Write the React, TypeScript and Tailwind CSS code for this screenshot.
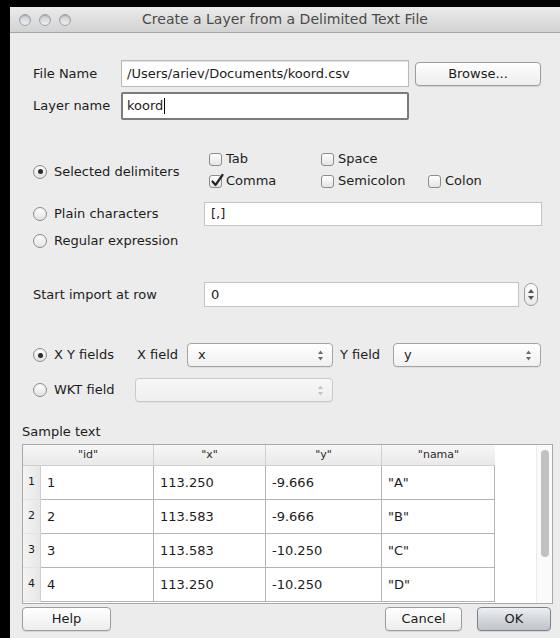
import React from "react";

function Radio({ checked }: { checked?: boolean }) {
  return (
    <span className="w-[14px] h-[14px] rounded-full border border-[#8c8c8c] bg-gradient-to-b from-white to-[#e2e2e2] flex items-center justify-center shrink-0 shadow-[inset_0_1px_1px_rgba(0,0,0,0.06)]">
      {checked && <span className="w-[5px] h-[5px] rounded-full bg-[#2b2b2b]" />}
    </span>
  );
}

function Check({ checked, label }: { checked?: boolean; label: string }) {
  return (
    <div className="flex items-center gap-[4px] h-[22px]">
      <span className="relative w-[13px] h-[13px] rounded-[3px] border border-[#8c8c8c] bg-gradient-to-b from-white to-[#e4e4e4] shrink-0">
        {checked && (
          <svg className="absolute left-[0px] top-[-3px]" width="15" height="15" viewBox="0 0 15 15">
            <path d="M2.5 8.5 L5.5 12 L12.5 2" fill="none" stroke="#262626" strokeWidth="2.2" strokeLinecap="round" strokeLinejoin="round" />
          </svg>
        )}
      </span>
      <span>{label}</span>
    </div>
  );
}

function Arrows({ faded }: { faded?: boolean }) {
  const c = faded ? "#c4c4c4" : "#6a6a6a";
  return (
    <svg width="7" height="11" viewBox="0 0 7 11">
      <path d="M3.5 0.5 L6 4 L1 4 Z" fill={c} />
      <path d="M3.5 10.5 L6 7 L1 7 Z" fill={c} />
    </svg>
  );
}

function Select({ value, width, disabled }: { value?: string; width: string; disabled?: boolean }) {
  return (
    <div
      className={`${width} h-[24px] rounded-[4px] border ${
        disabled ? "border-[#c9c9c9] from-[#f7f7f7] to-[#efefef]" : "border-[#a4a4a4] from-white to-[#f1f1f1]"
      } bg-gradient-to-b flex items-center justify-between pl-[10px] pr-[8px] shadow-[0_1px_0_rgba(0,0,0,0.05)]`}
    >
      <span>{value ?? ""}</span>
      <Arrows faded={disabled} />
    </div>
  );
}

function Button({ label, width, primary }: { label: string; width: string; primary?: boolean }) {
  return (
    <div
      className={`${width} h-[24px] rounded-[4px] border flex items-center justify-center ${
        primary
          ? "border-[#7d828a] bg-gradient-to-b from-[#eef0f3] via-[#d3d8de] to-[#bfc5cc]"
          : "border-[#9c9c9c] bg-gradient-to-b from-white to-[#ededed]"
      } shadow-[0_1px_1px_rgba(0,0,0,0.1)]`}
    >
      {label}
    </div>
  );
}

const rows = [
  ["1", "113.250", "-9.666", '"A"'],
  ["2", "113.583", "-9.666", '"B"'],
  ["3", "113.583", "-10.250", '"C"'],
  ["4", "113.250", "-10.250", '"D"'],
];

export default function App() {
  return (
    <div className="w-[560px] h-[638px] bg-black pt-[7px] pl-[10px] overflow-hidden font-['DejaVu_Sans',sans-serif] text-[13px] text-[#1c1c1c]">
      <div className="w-[550px] h-[631px] bg-[#ececec] flex flex-col">
        {/* title bar */}
        <div className="h-[26px] shrink-0 bg-gradient-to-b from-[#ebebeb] to-[#d3d3d3] border-b border-[#a5a5a5] flex items-center relative">
          <div className="flex gap-[8px] pl-[9px]">
            {[0, 1, 2].map((i) => (
              <span
                key={i}
                className="w-[12px] h-[12px] rounded-full border border-[#9da3a8] bg-gradient-to-b from-[#c8ccd0] to-[#eef0f2] shadow-[inset_0_1px_1px_rgba(0,0,0,0.2)]"
              />
            ))}
          </div>
          <div className="absolute inset-0 flex items-center justify-center text-[14px] text-[#4a4a4a]">
            Create a Layer from a Delimited Text File
          </div>
        </div>

        <div className="flex flex-col pl-[12px] pr-[7px]">
          {/* form */}
          <div className="flex flex-col pl-[11px]">
            <div className="flex items-center mt-[27px] h-[27px]">
              <span className="w-[88px]">File Name</span>
              <div className="w-[288px] h-[27px] bg-white border border-[#b9b9b9] shadow-[inset_0_1px_1px_rgba(0,0,0,0.12)] flex items-center pl-[5px]">
                /Users/ariev/Documents/koord.csv
              </div>
              <div className="ml-[6px]">
                <Button label="Browse..." width="w-[126px]" />
              </div>
            </div>

            <div className="flex items-center mt-[5px] h-[28px]">
              <span className="w-[88px]">Layer name</span>
              <div className="w-[288px] h-[28px] bg-white border-2 border-[#7b7b7b] rounded-[2px] flex items-center pl-[4px]">
                koord<span className="w-[1px] h-[16px] bg-black ml-[1px]" />
              </div>
            </div>

            <div className="flex items-center mt-[28px]">
              <div className="w-[176px] flex items-center gap-[7px] mt-[3px]">
                <Radio checked />
                <span>Selected delimiters</span>
              </div>
              <div className="flex flex-col">
                <div className="flex">
                  <div className="w-[112px]">
                    <Check label="Tab" />
                  </div>
                  <Check label="Space" />
                </div>
                <div className="flex">
                  <div className="w-[112px]">
                    <Check label="Comma" checked />
                  </div>
                  <div className="w-[107px]">
                    <Check label="Semicolon" />
                  </div>
                  <Check label="Colon" />
                </div>
              </div>
            </div>

            <div className="flex items-center mt-[10px] h-[24px]">
              <div className="w-[171px] flex items-center gap-[7px]">
                <Radio />
                <span>Plain characters</span>
              </div>
              <div className="w-[338px] h-[24px] bg-white border border-[#c4c4c4] flex items-center pl-[6px]">[,]</div>
            </div>

            <div className="flex items-center mt-[4px] h-[22px] gap-[7px]">
              <Radio />
              <span>Regular expression</span>
            </div>

            <div className="flex items-center mt-[30px] h-[25px]">
              <span className="w-[171px]">Start import at row</span>
              <div className="w-[315px] h-[25px] bg-white border border-[#c4c4c4] flex items-center pl-[6px]">0</div>
              <div className="ml-[5px] w-[14px] h-[23px] rounded-[7px] border border-[#9c9c9c] bg-gradient-to-b from-white to-[#e8e8e8] flex flex-col items-center justify-center gap-[3px]">
                <svg width="6" height="4" viewBox="0 0 6 4">
                  <path d="M3 0 L6 4 L0 4 Z" fill="#555" />
                </svg>
                <svg width="6" height="4" viewBox="0 0 6 4">
                  <path d="M3 4 L6 0 L0 0 Z" fill="#555" />
                </svg>
              </div>
            </div>

            <div className="flex items-center mt-[36px] h-[24px]">
              <div className="w-[104px] flex items-center gap-[7px]">
                <Radio checked />
                <span>X Y fields</span>
              </div>
              <span className="w-[50px]">X field</span>
              <Select value="x" width="w-[146px]" />
              <span className="w-[60px] pl-[7px]">Y field</span>
              <Select value="y" width="w-[148px]" />
            </div>

            <div className="flex items-center mt-[11px] h-[24px]">
              <div className="w-[102px] flex items-center gap-[7px]">
                <Radio />
                <span>WKT field</span>
              </div>
              <Select width="w-[198px]" disabled />
            </div>
          </div>

          <div className="mt-[22px] h-[16px] flex items-center">Sample text</div>

          {/* sample table */}
          <div className="mt-[4px] h-[160px] border border-[#a9a9a9] bg-white flex overflow-hidden">
            <div className="flex-1 flex flex-col">
              <div className="h-[21px] shrink-0 flex text-[11px] text-[#2a2a2a] bg-gradient-to-b from-[#f7f7f7] to-[#e9e9e9] border-b border-[#cfcfcf] w-[472px]">
                <div className="w-[131px] flex items-center justify-center border-r border-[#cfcfcf]">"id"</div>
                <div className="w-[112px] flex items-center justify-center border-r border-[#cfcfcf]">"x"</div>
                <div className="w-[116px] flex items-center justify-center border-r border-[#cfcfcf]">"y"</div>
                <div className="w-[113px] flex items-center justify-center">"nama"</div>
              </div>
              {rows.map((r, i) => (
                <div key={i} className="h-[34px] shrink-0 flex">
                  <div className="w-[18px] shrink-0 bg-gradient-to-r from-[#f4f4f4] to-[#e6e6e6] border-r border-[#cfcfcf] border-b border-b-[#e2e2e2] flex items-center justify-center text-[11px]">
                    {i + 1}
                  </div>
                  {r.map((c, j) => (
                    <div
                      key={j}
                      className={`${["w-[113px]", "w-[112px]", "w-[116px]", "w-[113px]"][j]} shrink-0 border-r border-b border-[#b4b4b4] flex items-center pl-[6px]`}
                    >
                      {c}
                    </div>
                  ))}
                </div>
              ))}
            </div>
            <div className="w-[16px] shrink-0 border-l border-[#ececec] bg-[#fafafa] flex justify-center pt-[5px]">
              <div className="w-[8px] h-[107px] rounded-full bg-[#c1c1c1]" />
            </div>
          </div>

          <div className="mt-[3px] flex items-center">
            <Button label="Help" width="w-[89px]" />
            <div className="flex-1" />
            <Button label="Cancel" width="w-[77px]" />
            <div className="ml-[15px] mr-[2px]">
              <Button label="OK" width="w-[74px]" primary />
            </div>
          </div>
        </div>
      </div>
    </div>
  );
}
